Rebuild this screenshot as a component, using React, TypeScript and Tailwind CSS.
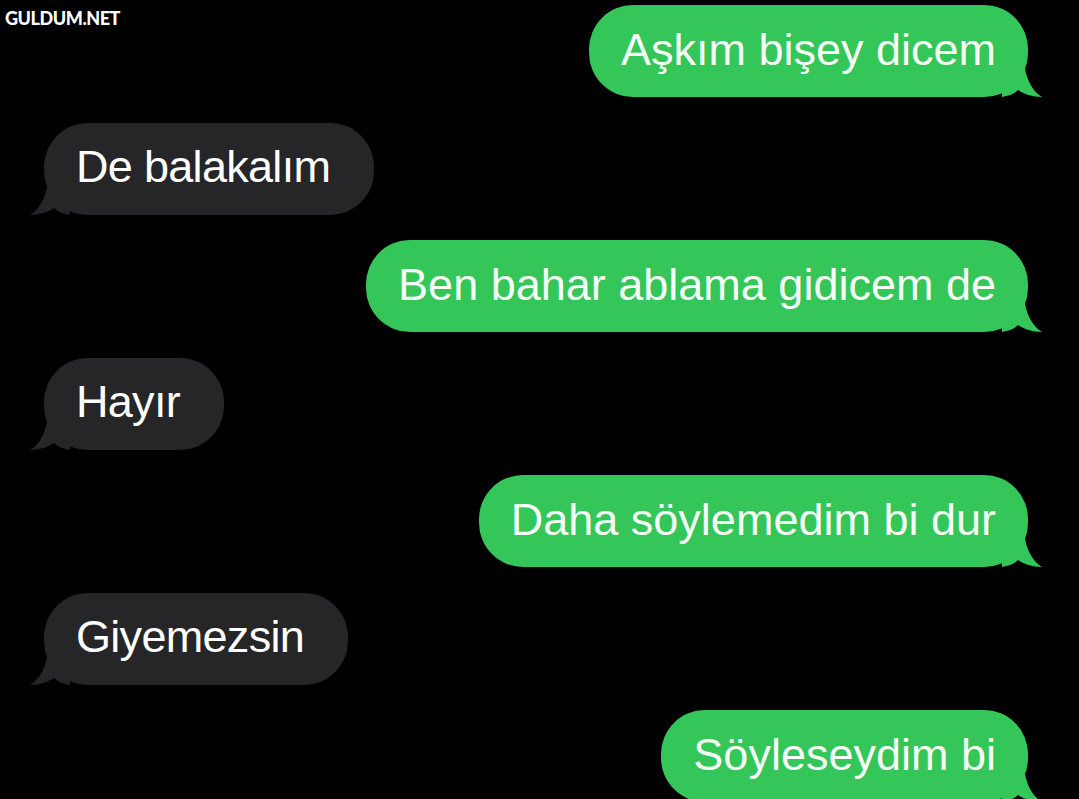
import React from "react";

type Message = {
    text: string;
    mine: boolean;
};

const messages: Message[] = [
    { text: "Aşkım bişey dicem", mine: true },
    { text: "De balakalım", mine: false },
    { text: "Ben bahar ablama gidicem de", mine: true },
    { text: "Hayır", mine: false },
    { text: "Daha söylemedim bi dur", mine: true },
    { text: "Giyemezsin", mine: false },
    { text: "Söyleseydim bi", mine: true },
];

const Tail = ({ mine }: { mine: boolean }) => (
    <svg
        width="40"
        height="34"
        viewBox="0 0 40 34"
        className={mine ? "absolute bottom-0 right-[-14px]" : "absolute bottom-0 left-[-14px] -scale-x-100"}
    >
        <path
            d="M0 0 H22 C24 16 30 28 40 34 C30 34 22 31 16 27 C12 31 6 33 0 34 Z"
            fill={mine ? "#34c659" : "#262628"}
        />
    </svg>
);

const Bubble = ({ text, mine }: Message) => (
    <div className={mine ? "flex justify-end" : "flex justify-start"}>
        <div
            className={
                mine
                    ? "relative flex h-[92px] items-center rounded-[44px] bg-[#34c659] px-8 pb-1 text-[#f6fff6]"
                    : "relative flex h-[92px] items-center rounded-[44px] bg-[#262628] pl-8 pr-11 pb-1 text-white"
            }
        >
            <Tail mine={mine} />
            <span
                className={
                    mine
                        ? "relative whitespace-nowrap text-[45px] leading-none"
                        : "relative whitespace-nowrap text-[45px] leading-none tracking-[-0.7px]"
                }
            >
                {text}
            </span>
        </div>
    </div>
);

export default function App() {
    return (
        <div className="relative h-[799px] w-[1079px] overflow-hidden bg-black font-['Liberation_Sans',Arial,sans-serif]">
            {/* watermark */}
            <div className="absolute left-[5px] top-[5px] font-['Lato',sans-serif] text-[18px] font-black tracking-tight text-white">
                GULDUM.NET
            </div>

            <div className="flex flex-col gap-[25.5px] pl-[44px] pr-[51px] pt-[5px]">
                {messages.map((m, i) => (
                    <Bubble key={i} text={m.text} mine={m.mine} />
                ))}
            </div>
        </div>
    );
}
